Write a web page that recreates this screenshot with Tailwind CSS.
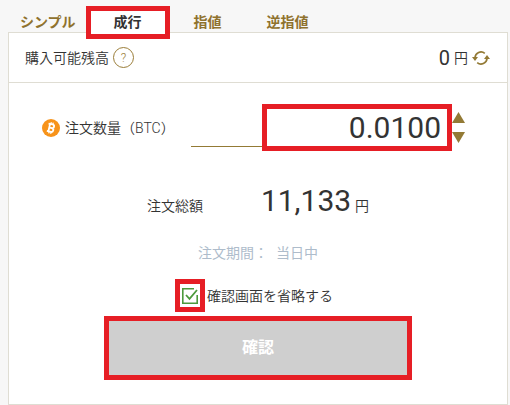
<!DOCTYPE html>
<html lang="ja">
<head>
    <meta charset="UTF-8">
    <meta name="viewport" content="width=device-width, initial-scale=1.0">
    <title>成行注文</title>
    <script src="https://cdn.jsdelivr.net/npm/@tailwindcss/browser@4"></script>
</head>
<body class="min-h-screen flex flex-col bg-[#f7f7f7] pl-2 pr-[2px] text-sm leading-5 text-[#333333] font-['Roboto','Noto_Sans_CJK_JP',sans-serif]">

    <!-- Order type tabs -->
    <nav class="flex h-8 items-center pt-3 pl-3 font-bold text-[#8f722e]">
        <button type="button">シンプル</button>
        <button type="button" class="relative z-10 -my-1 ml-[10px] h-[33px] w-[84px] border-[5px] border-[#e61e25] bg-white text-[#333333]">成行</button>
        <button type="button" class="ml-6">指値</button>
        <button type="button" class="ml-[45px]">逆指値</button>
    </nav>

    <main class="flex-1 border border-[#dfddd3] bg-white">
        <!-- Available balance -->
        <div class="flex h-[50px] items-center border-b border-[#dfddd3] pl-4 pr-[17px]">
            <span class="font-[350]">購入可能残高</span>
            <button type="button" aria-label="ヘルプ" class="ml-1 size-[21px] rounded-full border border-[#9a7d38] text-xs leading-none font-[350] text-[#9a7d38]">?</button>
            <div class="ml-auto flex items-center">
                <span class="text-xl">0</span>
                <span class="ml-1 font-[350]">円</span>
                <button type="button" aria-label="更新" class="ml-1">
                    <svg class="size-[18px]" viewBox="0 0 18 18" fill="none" stroke="#937a35" stroke-width="1.7">
                        <path d="M3 8.500A6 6 0 0 1 12.800 4.300"/>
                        <path d="M15 9.500A6 6 0 0 1 5.200 13.700"/>
                        <path d="M0 8h6L3 12z" fill="#937a35" stroke="none"/>
                        <path d="M12 10h6L15 6z" fill="#937a35" stroke="none"/>
                    </svg>
                </button>
            </div>
        </div>

        <form class="flex flex-col pt-[21px] pb-6">
            <!-- Quantity -->
            <div class="flex items-center pl-[33px] pr-[42px]">
                <svg class="size-[18px] shrink-0" viewBox="0 0 18 18" fill="none">
                    <circle cx="9" cy="9" r="9" fill="#f7931a"/>
                    <g transform="rotate(13 9 9)" stroke="#ffffff" stroke-width="1.800">
                        <path d="M5.600 5.200h4.200a1.800 1.800 0 0 1 0 3.700H7.200M9.800 8.900a1.950 1.950 0 0 1 0 3.900H5.600M7.200 5.200v7.600"/>
                        <path d="M8 3.200v2M10 3.200v2M8 12.800v2M10 12.800v2" stroke-width="1.200"/>
                    </g>
                </svg>
                <label for="quantity" class="ml-[5px] w-[126px] shrink-0 whitespace-nowrap font-[350]">注文数量（BTC）</label>
                <div class="flex flex-1 items-stretch">
                    <div class="mb-1 flex-1 border-b border-[#937a35]"></div>
                    <input id="quantity" type="text" inputmode="decimal" value="0.0100" class="h-[47px] w-[190px] border-[5px] border-[#e61e25] bg-white pr-[6px] text-right text-[30px] outline-none">
                </div>
                <div class="flex flex-col gap-[9px]">
                    <button type="button" aria-label="増やす"><svg class="h-[11px] w-[13px]" viewBox="0 0 13 11" fill="#937a35"><path d="M6.500 0L13 11H0z"/></svg></button>
                    <button type="button" aria-label="減らす"><svg class="h-[11px] w-[13px]" viewBox="0 0 13 11" fill="#937a35"><path d="M0 0H13L6.500 11z"/></svg></button>
                </div>
            </div>

            <!-- Total -->
            <div class="mt-8 flex h-9 items-baseline justify-center">
                <span class="w-[114px] font-[350]">注文総額</span>
                <span class="text-[30px] leading-9">11,133</span>
                <span class="ml-1 font-[350]">円</span>
            </div>

            <dl class="mt-6 flex justify-center gap-2 text-[#aebccb]">
                <dt>注文期間：</dt>
                <dd>当日中</dd>
            </dl>

            <!-- Skip confirmation -->
            <div class="mt-4 flex h-[33px] items-center justify-center pr-2">
                <span class="relative flex h-[33px] w-[30px] items-center justify-center border-[5px] border-[#e61e25]">
                    <input id="skip" type="checkbox" checked class="peer size-4 appearance-none">
                    <svg class="pointer-events-none invisible absolute size-4 peer-checked:visible" viewBox="0 0 16 16" fill="none" stroke="#4c9a3c" stroke-width="1.600">
                        <path d="M12 0.800H0.800V15.200H15.200V7"/>
                        <path d="M4 7L7.500 10.800L15 2" stroke-width="1.800"/>
                    </svg>
                </span>
                <label for="skip" class="ml-[2px] font-[350]">確認画面を省略する</label>
            </div>

            <button type="submit" class="mx-auto mt-1 h-16 w-[62%] border-[5px] border-[#e61e25] bg-[#cfcfcf] text-base font-bold text-white">確認</button>
        </form>
    </main>

</body>
</html>
